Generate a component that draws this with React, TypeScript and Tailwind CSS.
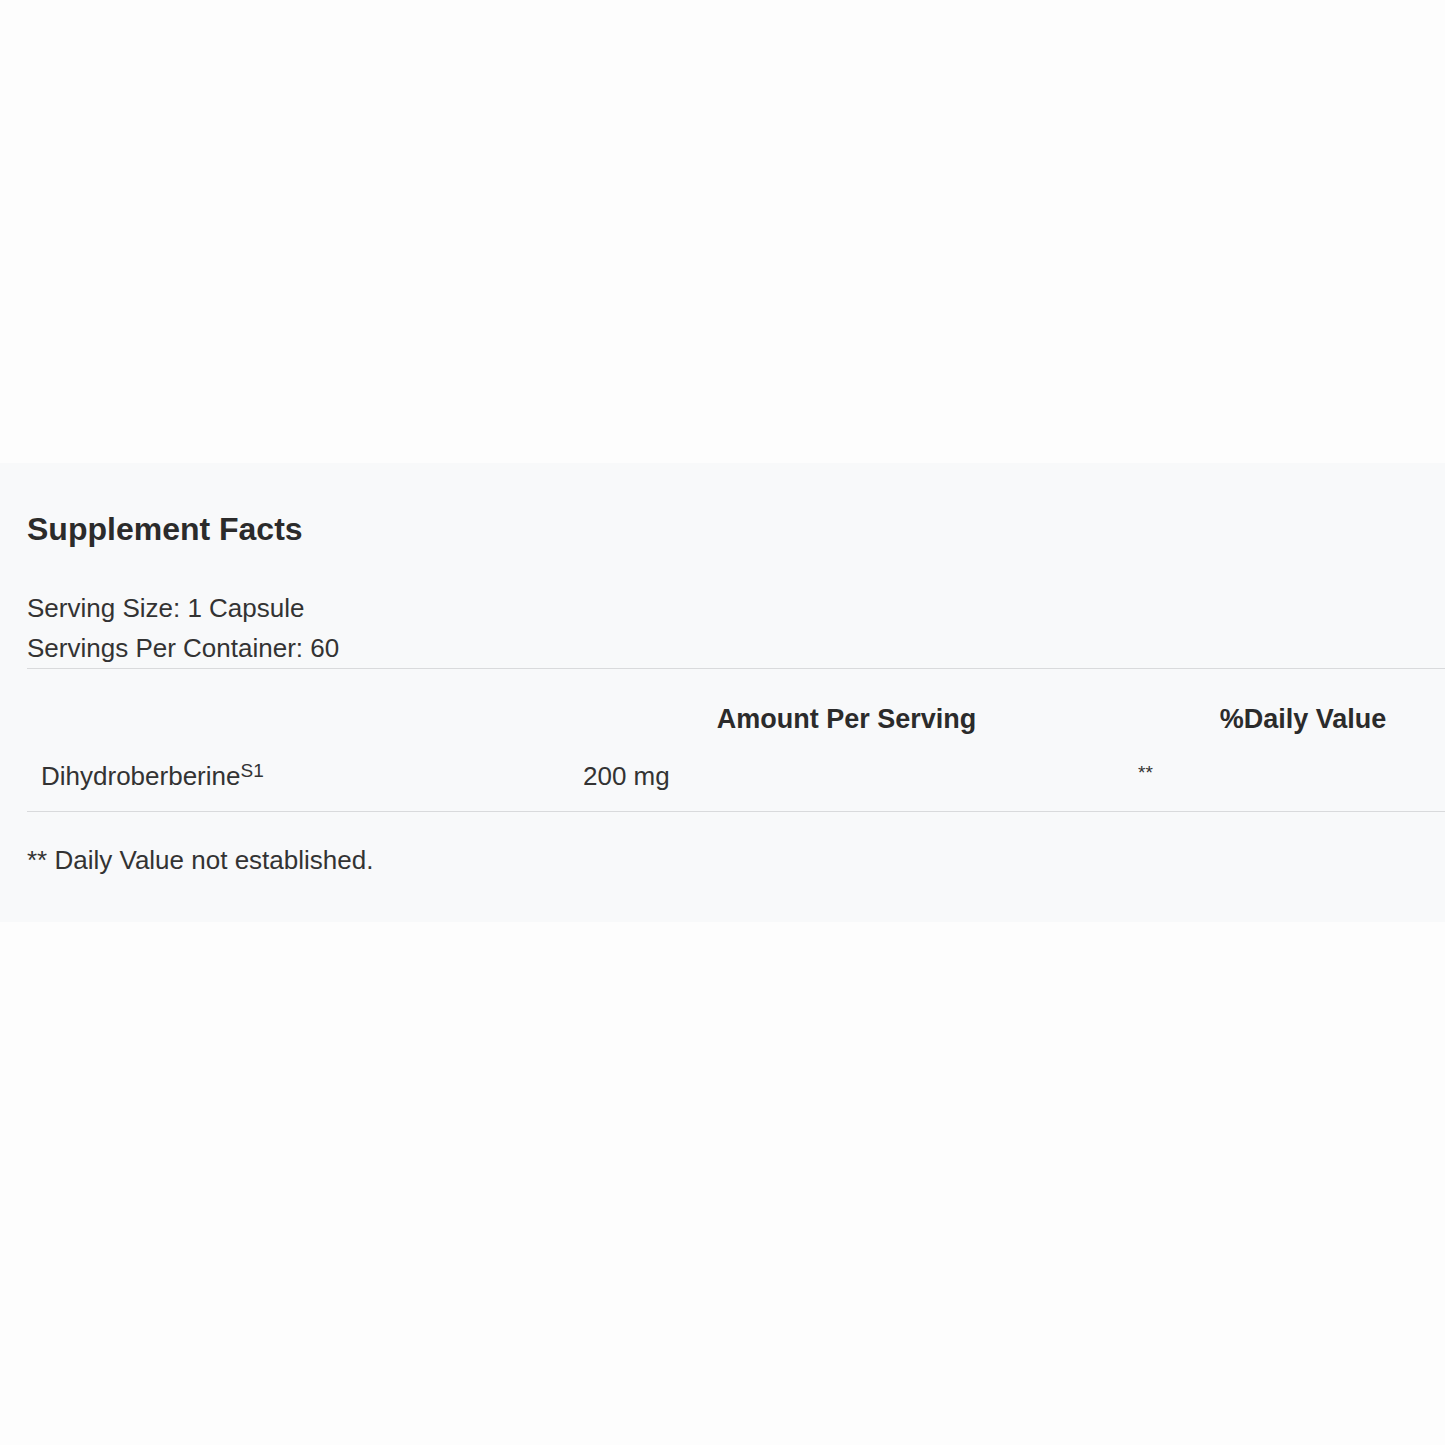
export default function App() {
  const font = { fontFamily: '"Liberation Sans", Arial, Helvetica, sans-serif' };
  return (
    <div className="min-h-screen w-full bg-[#fdfdfd] pt-[463px] text-[#333333]" style={font}>
      <section className="w-full bg-[#f8f9fa] pl-[27px] pt-[46px] pb-[46px]">
        <h2 className="text-[32px] leading-[40px] font-bold text-[#2b2b2b]">Supplement Facts</h2>
        <div className="mt-[39px] text-[26px] leading-[40px]">
          <p>Serving Size: 1 Capsule</p>
          <p>Servings Per Container: 60</p>
        </div>
        <div className="border-t border-[#d9dadc]">
          <div className="grid grid-cols-[542px_555px_1fr] pt-[34px]">
            <div></div>
            <div className="text-center text-[27px] leading-[32px] font-bold text-[#2b2b2b]">Amount Per Serving</div>
            <div className="pl-[37px] text-center text-[27px] leading-[32px] font-bold text-[#2b2b2b]">%Daily Value</div>
          </div>
          <div className="grid grid-cols-[542px_555px_1fr] pt-[25px] pb-[16px] text-[26px] leading-[32px]">
            <div className="pl-[14px]">
              Dihydroberberine<sup className="text-[19px] top-[-0.4em]">S1</sup>
            </div>
            <div className="pl-[14px]">200 mg</div>
            <div className="pl-[14px]">
              <span className="relative top-[-6px] text-[19px]">**</span>
            </div>
          </div>
        </div>
        <div className="border-t border-[#d9dadc] pt-[32px]">
          <p className="text-[26px] leading-[32px]">** Daily Value not established.</p>
        </div>
      </section>
    </div>
  );
}
